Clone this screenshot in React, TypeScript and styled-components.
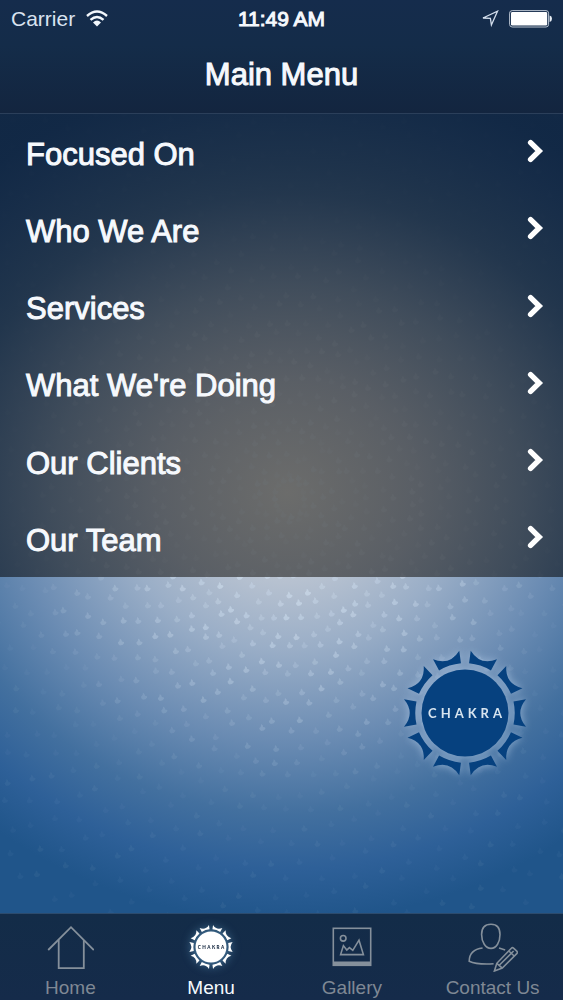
import React from "react";
import styled, { createGlobalStyle } from "styled-components";

const GlobalStyle = createGlobalStyle`
  * { box-sizing: border-box; }
  body {
    margin: 0;
    font-family: "Liberation Sans", Arial, sans-serif;
    color: #f6f9fd;
    background: #14294a;
  }
`;

const Screen = styled.div`
  min-height: 100vh;
  display: flex;
  flex-direction: column;
`;

const Header = styled.header`
  background: linear-gradient(#152c4c, #142c49 40%, #13253f);
  border-bottom: 1px solid #2b3f5a;
`;

const StatusBar = styled.div`
  display: grid;
  grid-template-columns: 1fr auto 1fr;
  align-items: center;
  height: 37px;
  padding: 0 11px;
  font-size: 21px;
`;

const StatusGroup = styled.div<{ $end?: boolean }>`
  display: flex;
  align-items: center;
  gap: ${(p) => (p.$end ? 10 : 11)}px;
  justify-content: ${(p) => (p.$end ? "flex-end" : "flex-start")};
  color: #d9e3f0;
`;

const Time = styled.time`
  -webkit-text-stroke: 1px currentColor;
`;

const Title = styled.h1`
  margin: 0;
  height: 76px;
  line-height: 76px;
  text-align: center;
  font-size: 31px;
  font-weight: 400;
  -webkit-text-stroke: 1px currentColor;
`;

const Main = styled.main`
  position: relative;
  flex: 1;
  display: flex;
  flex-direction: column;
  background: radial-gradient(
    ellipse 84% 54% at 51% 47%,
    #d2d5dc 0%,
    #b9c3d1 20%,
    #9aaec7 37%,
    #6b8cb3 58%,
    #43709f 75%,
    #2e6098 88%,
    #20558a 100%
  );
`;

const DotField = styled.svg`
  position: absolute;
  inset: 0;
  width: 100%;
  height: 100%;
`;

const MenuList = styled.nav`
  position: relative;
  flex: 58 0 0;
  display: grid;
  grid-auto-rows: 1fr;
  background: radial-gradient(
    ellipse 84% 90% at 51% 82%,
    rgba(82, 82, 79, 0.8) 0%,
    rgba(68, 71, 75, 0.8) 28%,
    rgba(48, 57, 67, 0.8) 50%,
    rgba(25, 40, 58, 0.82) 72%,
    rgba(15, 33, 58, 0.86) 100%
  );
`;

const MenuItem = styled.a`
  display: flex;
  align-items: center;
  justify-content: space-between;
  min-height: 60px;
  padding: 4px 18px 0 26px;
  color: inherit;
  text-decoration: none;
  font-size: 31px;
  -webkit-text-stroke: 1px currentColor;

  svg { margin-bottom: 7px; }
`;

const BrandArea = styled.section`
  position: relative;
  flex: 42 0 0;
  display: flex;
  align-items: flex-start;
  justify-content: flex-end;
`;

const BrandMark = styled.div`
  margin: 74px 36px 0 0;
`;

const Emblem = styled.svg<{ $glow: string }>`
  display: block;
  overflow: visible;
  filter: drop-shadow(0 0 4px ${(p) => p.$glow});
`;

const TabBar = styled.nav`
  display: grid;
  grid-template-columns: repeat(4, 1fr);
  height: 87px;
  border-top: 1px solid #2c4b6d;
  background: linear-gradient(#132c48, #152b4a);
`;

const Tab = styled.a<{ $active?: boolean }>`
  display: flex;
  flex-direction: column;
  align-items: center;
  padding-top: 8px;
  gap: 5px;
  font-size: 19px;
  line-height: 22px;
  text-decoration: none;
  color: ${(p) => (p.$active ? "#f6fafe" : "#7f8894")};
`;

const TabIcon = styled.span`
  display: flex;
  align-items: center;
  justify-content: center;
  height: 50px;
`;

const DOTS = (() => {
  const dots: { x: number; y: number; o: number }[] = [];
  let r = 16;
  let ring = 0;
  while (r < 480) {
    const count = r < 60 ? 14 : r < 120 ? 34 : r < 250 ? 54 : 76;
    for (let i = 0; i < count; i++) {
      const a = ((i + (ring % 2) / 2 + Math.sin(i * 5 + ring * 2) / 8) / count) * Math.PI * 2;
      const wobble = Math.sin(i * 7 + ring * 3) * 3;
      const x = 288 + Math.cos(a) * (r + wobble);
      const y = 385 + Math.sin(a) * (r + wobble);
      if (x > -5 && x < 568 && y > -5 && y < 805) {
        const fade = Math.max(0.05, 0.78 - r / 400);
        dots.push({ x, y, o: fade * (0.75 + Math.sin(i * 11 + ring) / 4) });
      }
    }
    r += r < 60 ? 10 : r < 250 ? 14 : 17;
    ring += 1;
  }
  return dots;
})();

function Backdrop() {
  return (
    <DotField viewBox="0 0 563 800" preserveAspectRatio="xMidYMid slice" aria-hidden="true">
      {DOTS.map((d, i) => (
        <path
          key={i}
          d="M-1-4Q1-3 1-1Q4-1 3 1Q2 3-1 3Q-3 2-3 0Q-1-1-1-4Z"
          fill="#d3e3f4"
          opacity={d.o.toFixed(2)}
          transform={`translate(${d.x.toFixed(1)} ${d.y.toFixed(1)})`}
        />
      ))}
    </DotField>
  );
}

const RAYS = Array.from({ length: 10 }, (_, i) => i * 36);

interface ChakraProps {
  size: number;
  fill: string;
  ink: string;
  glow: string;
  bold?: boolean;
}

function Chakra({ size, fill, ink, glow, bold }: ChakraProps) {
  return (
    <Emblem $glow={glow} width={size} height={size} viewBox="-62 -62 124 124" role="img" aria-label="Chakra">
      <g fill={fill}>
        <circle r="43.5" />
        {RAYS.map((a) => (
          <path
            key={a}
            transform={`rotate(${a})`}
            d="M48.5-11.5L61-13.8Q49.5 0 61 13.8L48.5 11.5Q51 0 48.5-11.5Z"
          />
        ))}
      </g>
      <text
        x="2"
        y="5"
        textAnchor="middle"
        fontFamily="Lato, sans-serif"
        fontSize="13"
        fontWeight={bold ? 900 : 700}
        letterSpacing="4"
        fill={ink}
      >
        CHAKRA
      </text>
    </Emblem>
  );
}

function WifiIcon() {
  return (
    <svg width="22" height="17" viewBox="0 0 22 17" fill="none" stroke="#f2f7fc" strokeWidth="2.4" aria-hidden="true">
      <path d="M1 6Q11-3 21 6" />
      <path d="M4.5 9.9Q11 4 17.5 9.9" />
      <path d="M7 12.6Q11 8.6 15 12.6L11 16.4Z" fill="#f2f7fc" stroke="none" />
    </svg>
  );
}

function LocationIcon() {
  return (
    <svg width="18" height="18" viewBox="0 0 18 18" fill="none" stroke="#d3deec" strokeWidth="1.3" strokeLinejoin="miter" aria-hidden="true">
      <path d="M16.5 1.2L10.4 15L9.4 8.4L2 8Z" />
    </svg>
  );
}

function BatteryIcon() {
  return (
    <svg width="43" height="18" viewBox="0 0 43 18" aria-hidden="true">
      <rect x="0.6" y="0.6" width="39" height="16.4" rx="2.6" fill="none" stroke="#b9c3d0" strokeWidth="1" />
      <rect x="2" y="2" width="36.2" height="13.6" rx="1.4" fill="#fff" />
      <path d="M40.6 5.6Q43 6.2 43 8.8T40.6 12Z" fill="#e8eef5" />
    </svg>
  );
}

function Chevron() {
  return (
    <svg width="18" height="24" viewBox="0 0 18 24" fill="none" stroke="#fff" strokeWidth="5.4" aria-hidden="true">
      <path d="M3.6 3.6L12.2 12L3.6 20.4" strokeLinecap="round" />
    </svg>
  );
}

function HomeIcon() {
  return (
    <svg width="48" height="46" viewBox="0 0 48 46" fill="none" stroke="#85909b" strokeWidth="1.8" aria-hidden="true">
      <path d="M2.2 26L25 3.2L47.8 26" />
      <path d="M12.7 16V44.2H37.8V16" />
    </svg>
  );
}

function GalleryIcon() {
  return (
    <svg width="40" height="40" viewBox="0 0 40 40" fill="none" stroke="#85909b" strokeWidth="1.6" aria-hidden="true">
      <rect x="1.3" y="1.3" width="37.4" height="37" />
      <path d="M1 36.7H39" strokeWidth="4.6" />
      <circle cx="11.2" cy="11.3" r="2.8" />
      <path d="M8.6 27.6H31.4L27 13.2L20.8 23.4L17.4 20.6L14.8 23L11.4 18.6Z" />
    </svg>
  );
}

function ContactIcon() {
  return (
    <svg width="50" height="50" viewBox="0 0 50 50" fill="none" stroke="#85909b" strokeWidth="1.6" aria-hidden="true">
      <path d="M23 2.2C29 2.2 32 6 32 12.5C32 20 28.5 26.4 23 26.4S13.6 20 13.6 12.5C13.6 6 17 2.2 23 2.2Z" />
      <path d="M14.6 26C6.5 27 1.3 30.6 1.2 39.2C7 42 15 42.4 25.6 41.8" />
      <path d="M31 26L37.2 28" />
      <path d="M26.4 49L28.8 41.3L43.4 26.2Q44.4 25.2 45.5 26.2L49 29.4Q49.8 30.4 49 31.4L34.3 46.1Z" />
      <path d="M28.8 41.3L34.3 46.1M31.5 43L45.6 29M40.8 29L46.2 34" />
    </svg>
  );
}

const ITEMS = ["Focused On", "Who We Are", "Services", "What We're Doing", "Our Clients", "Our Team"];

export default function App() {
  return (
    <>
      <GlobalStyle />
      <Screen>
        <Header>
          <StatusBar>
            <StatusGroup>
              <span>Carrier</span>
              <WifiIcon />
            </StatusGroup>
            <Time>11:49 AM</Time>
            <StatusGroup $end>
              <LocationIcon />
              <BatteryIcon />
            </StatusGroup>
          </StatusBar>
          <Title>Main Menu</Title>
        </Header>
        <Main>
          <Backdrop />
          <MenuList aria-label="Main menu">
            {ITEMS.map((label) => (
              <MenuItem key={label} href="#">
                <span>{label}</span>
                <Chevron />
              </MenuItem>
            ))}
          </MenuList>
          <BrandArea>
            <BrandMark>
              <Chakra size={124} fill="#06417f" ink="#d7e4ef" glow="rgba(180, 204, 232, 0.75)" />
            </BrandMark>
          </BrandArea>
        </Main>
        <TabBar aria-label="Tabs">
          <Tab href="#">
            <TabIcon><HomeIcon /></TabIcon>
            Home
          </Tab>
          <Tab href="#" $active aria-current="page">
            <TabIcon>
              <Chakra size={44} fill="#fff" ink="#10233c" glow="rgba(120, 190, 235, 0.6)" bold />
            </TabIcon>
            Menu
          </Tab>
          <Tab href="#">
            <TabIcon><GalleryIcon /></TabIcon>
            Gallery
          </Tab>
          <Tab href="#">
            <TabIcon><ContactIcon /></TabIcon>
            Contact Us
          </Tab>
        </TabBar>
      </Screen>
    </>
  );
}
